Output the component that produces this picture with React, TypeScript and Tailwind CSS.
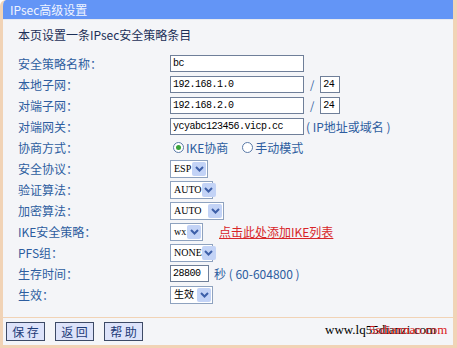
import React from 'react';

const font = { fontFamily: '"Noto Sans CJK SC", "DejaVu Sans", sans-serif' };
const mono = { fontFamily: '"Liberation Mono", "Noto Sans CJK SC", monospace' };
const serif = { fontFamily: '"Liberation Serif", "Noto Sans CJK SC", serif' };

const Select: React.FC<{ value: string; w: string }> = ({ value, w }) => (
  <div className={`flex items-center justify-between h-[18px] ${w} bg-white border border-[#8ea2bf] pl-[3px] pr-[1px]`}>
    <span className="text-[10px] text-black leading-none whitespace-nowrap" style={serif}>{value}</span>
    <span className="shrink-0 flex items-center justify-center w-[14px] h-[14px] bg-[#c3d3f6] rounded-[2px]">
      <svg width="9" height="6" viewBox="0 0 9 6">
        <path d="M1 1 L4.5 4.5 L8 1" stroke="#3d5fa8" strokeWidth="2" fill="none" />
      </svg>
    </span>
  </div>
);

const Input: React.FC<{ value: string; w: string }> = ({ value, w }) => (
  <div className={`flex items-center h-[17px] ${w} bg-white border border-[#6f7f99] px-[2px]`}>
    <span className="text-[10px] tracking-[-0.5px] text-black leading-none whitespace-nowrap" style={mono}>{value}</span>
  </div>
);

const Row: React.FC<{ label: string; children: React.ReactNode }> = ({ label, children }) => (
  <div className="flex items-center h-[21px]">
    <span className="w-[152px] text-[12px] text-[#2d5d9f]">{label}</span>
    <div className="flex items-center gap-[6px]">{children}</div>
  </div>
);

const Radio: React.FC<{ on?: boolean }> = ({ on }) => (
  <span className="flex items-center justify-center w-[11px] h-[11px] rounded-full border border-[#5a7aa8] bg-white">
    {on && <span className="w-[5px] h-[5px] rounded-full bg-[#3aa33a]" />}
  </span>
);

const Btn: React.FC<{ label: string }> = ({ label }) => (
  <div className="flex items-center justify-center w-[39px] h-[19px] bg-[#dde3fa] border border-[#3d4a66] text-[12px] text-[#1c3a78] whitespace-pre">
    {label}
  </div>
);

export default function App() {
  return (
    <div className="w-[457px] h-[348px] bg-white" style={font}>
      <div className="flex flex-col w-full h-full bg-[#f4f5f8] border-l-[3px] border-r-[4px] border-b-[3px] border-[#f1d3b6] rounded-tl-[6px] overflow-hidden">
        <div className="h-[19px] bg-[#6395f6] flex items-center pl-[10px] -ml-[3px] -mr-[4px] rounded-tl-[6px]">
          <span className="text-[12px] text-[#f0f4ff]">IPsec高级设置</span>
        </div>
        <div className="h-[1px] bg-[#e7e9f0] -ml-[3px] -mr-[4px]" />
        <div className="flex-1 pl-[15px] pt-[4px]">
          <div className="h-[22px] flex items-center text-[12px] text-[#1c2f57]">本页设置一条IPsec安全策略条目</div>
          <div className="h-[7px]" />
          <Row label="安全策略名称：">
            <Input value="bc" w="w-[134px]" />
          </Row>
          <Row label="本地子网：">
            <Input value="192.168.1.0" w="w-[134px]" />
            <span className="text-[11px] text-[#2d5d9f]">/</span>
            <Input value="24" w="w-[20px]" />
          </Row>
          <Row label="对端子网：">
            <Input value="192.168.2.0" w="w-[134px]" />
            <span className="text-[11px] text-[#2d5d9f]">/</span>
            <Input value="24" w="w-[20px]" />
          </Row>
          <Row label="对端网关：">
            <Input value="ycyabc123456.vicp.cc" w="w-[134px]" />
            <span className="text-[12px] text-[#2d5d9f] -ml-[4px]">( IP地址或域名 )</span>
          </Row>
          <Row label="协商方式：">
            <div className="flex items-center gap-[2px] pl-[3px]">
              <Radio on />
              <span className="text-[12px] text-[#2d5d9f]">IKE协商</span>
            </div>
            <div className="flex items-center gap-[2px] pl-[8px]">
              <Radio />
              <span className="text-[12px] text-[#2d5d9f]">手动模式</span>
            </div>
          </Row>
          <Row label="安全协议：">
            <Select value="ESP" w="w-[38px]" />
          </Row>
          <Row label="验证算法：">
            <Select value="AUTO" w="w-[43px]" />
          </Row>
          <Row label="加密算法：">
            <Select value="AUTO" w="w-[54px]" />
          </Row>
          <Row label="IKE安全策略：">
            <Select value="wx" w="w-[33px]" />
            <span className="ml-[10px] text-[12px] text-[#d8262a] underline">点击此处添加IKE列表</span>
          </Row>
          <Row label="PFS组：">
            <Select value="NONE" w="w-[43px]" />
          </Row>
          <Row label="生存时间：">
            <Input value="28800" w="w-[39px]" />
            <span className="text-[12px] text-[#2d5d9f] -ml-[1px]">秒 ( 60-604800 )</span>
          </Row>
          <Row label="生效：">
            <Select value="生效" w="w-[43px]" />
          </Row>
        </div>
        <div className="h-[1px] bg-[#f1d3b6] -ml-[3px] -mr-[4px]" />
        <div className="h-[27px] flex items-center pl-[3px] gap-[10px] relative">
          <Btn label="保 存" />
          <Btn label="返 回" />
          <Btn label="帮 助" />
          <div className="absolute left-[322px] top-[5px] text-[13px] leading-none whitespace-nowrap" style={serif}>
            <span className="text-black">www.lq55dianzi.com</span>
            <span className="absolute left-[44px] top-0 text-[#d82020]">5sdiannao.com</span>
          </div>
        </div>
      </div>
    </div>
  );
}
